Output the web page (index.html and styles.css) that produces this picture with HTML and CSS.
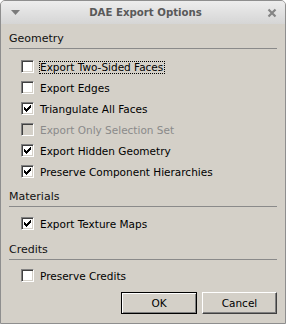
FILE: index.html
```html
<!DOCTYPE html>
<html>
    <head>
        <title>DAE Export Options</title>
        <link rel="stylesheet" href="styles.css">
    </head>
    <body>
        <div class="window">
            <div class="titlebar">
                <svg class="menu-arrow" width="9" height="6" viewBox="0 0 9 6"><path d="M0 0 H9 L4.5 5 Z" fill="#7b7b7b"/></svg>
                <span class="title">DAE Export Options</span>
                <svg class="close" width="10" height="10" viewBox="0 0 10 10"><path d="M1.5 1.5 L8.5 8.5 M8.5 1.5 L1.5 8.5" stroke="#858585" stroke-width="2.2"/></svg>
            </div>
            <div class="content">
                <div class="group-head">Geometry</div>
                <div class="options">
                    <div class="option"><span class="box"></span><span class="label focus">Export Two-Sided Faces</span></div>
                    <div class="option"><span class="box"></span><span class="label">Export Edges</span></div>
                    <div class="option"><span class="box"><svg class="tick" width="9" height="9" viewBox="0 0 9 9"><path transform="translate(1 1)" d="M6 0h1v1h-1z M5 1h2v1h-2z M0 2h1v1h-1z M4 2h3v1h-3z M0 3h2v1h-2z M3 3h3v1h-3z M0 4h5v1h-5z M1 5h3v1h-3z M2 6h1v1h-1z"/></svg></span><span class="label">Triangulate All Faces</span></div>
                    <div class="option disabled"><span class="box"></span><span class="label">Export Only Selection Set</span></div>
                    <div class="option"><span class="box"><svg class="tick" width="9" height="9" viewBox="0 0 9 9"><path transform="translate(1 1)" d="M6 0h1v1h-1z M5 1h2v1h-2z M0 2h1v1h-1z M4 2h3v1h-3z M0 3h2v1h-2z M3 3h3v1h-3z M0 4h5v1h-5z M1 5h3v1h-3z M2 6h1v1h-1z"/></svg></span><span class="label">Export Hidden Geometry</span></div>
                    <div class="option"><span class="box"><svg class="tick" width="9" height="9" viewBox="0 0 9 9"><path transform="translate(1 1)" d="M6 0h1v1h-1z M5 1h2v1h-2z M0 2h1v1h-1z M4 2h3v1h-3z M0 3h2v1h-2z M3 3h3v1h-3z M0 4h5v1h-5z M1 5h3v1h-3z M2 6h1v1h-1z"/></svg></span><span class="label">Preserve Component Hierarchies</span></div>
                </div>

                <div class="group-head">Materials</div>
                <div class="options materials">
                    <div class="option"><span class="box"><svg class="tick" width="9" height="9" viewBox="0 0 9 9"><path transform="translate(1 1)" d="M6 0h1v1h-1z M5 1h2v1h-2z M0 2h1v1h-1z M4 2h3v1h-3z M0 3h2v1h-2z M3 3h3v1h-3z M0 4h5v1h-5z M1 5h3v1h-3z M2 6h1v1h-1z"/></svg></span><span class="label">Export Texture Maps</span></div>
                </div>

                <div class="group-head credits-head">Credits</div>
                <div class="options credits">
                    <div class="option"><span class="box"></span><span class="label">Preserve Credits</span></div>
                </div>

                <div class="buttons">
                    <button class="btn default">OK</button>
                    <button class="btn">Cancel</button>
                </div>
            </div>
        </div>
    </body>
</html>
```

FILE: styles.css
```css
html, body{
    margin: 0;
    padding: 0;
    background: #fff;
}
body{
    font-family: "DejaVu Sans", sans-serif;
    font-size: 10px;
    color: #000;
}

.window{
    width: 286px;
    height: 324px;
    box-sizing: border-box;
    border: 1px solid #8e8e8e;
    border-radius: 5px 5px 0 0;
    background: #d4d0c8;
    overflow: hidden;
    display: flex;
    flex-direction: column;
}

.titlebar{
    height: 23px;
    flex: none;
    display: flex;
    align-items: center;
    justify-content: space-between;
    padding: 0 8px 0 10px;
    background: linear-gradient(#ededed, #d5d5d5);
}
.title{
    font-weight: bold;
    font-size: 10.2px;
    color: #595959;
    margin-left: 4px;
}
.menu-arrow, .close{
    display: block;
}

.content{
    flex: 1;
    display: flex;
    flex-direction: column;
    padding: 0 8px 9px;
}

.group-head{
    font-size: 11px;
    line-height: 14px;
    padding-top: 8px;
    padding-bottom: 2px;
    border-bottom: 1px solid #8a8a8a;
    color: #111;
}
.credits-head{
    padding-top: 9px;
}

.options{
    padding-top: 7px;
}
.options.materials{
    padding-top: 6px;
}
.options.credits{
    padding-top: 5px;
}
.option{
    height: 21px;
    display: flex;
    align-items: center;
    padding-left: 12px;
    gap: 5px;
}

.box{
    width: 9px;
    height: 9px;
    padding: 1px;
    flex: none;
    border: 1px solid;
    border-color: #808080 #fff #fff #808080;
    box-shadow: inset 1px 1px #404040, inset -1px -1px #d4d0c8;
    background: #fff;
}
.tick{
    display: block;
    shape-rendering: crispEdges;
}

.label{
    font-size: 10.5px;
    line-height: 11px;
    margin-top: 2px;
    border: 1px solid transparent;
    padding-right: 1px;
}
.label.focus{
    border: 1px dotted #000;
}

.disabled .box{
    background: #d4d0c8;
}
.disabled .label{
    color: #8a8a8a;
}

.buttons{
    margin-top: auto;
    display: flex;
    justify-content: flex-end;
    gap: 5px;
}
.btn{
    width: 75px;
    height: 22px;
    padding: 0;
    font-family: "DejaVu Sans", sans-serif;
    font-size: 10.5px;
    color: #000;
    background: #d4d0c8;
    border: 1px solid;
    border-color: #fff #404040 #404040 #fff;
    box-shadow: inset -1px -1px #808080;
}
.btn.default{
    width: 76px;
    border-color: #000;
    box-shadow: inset 1px 1px #fff, inset -1px -1px #808080;
}
```
